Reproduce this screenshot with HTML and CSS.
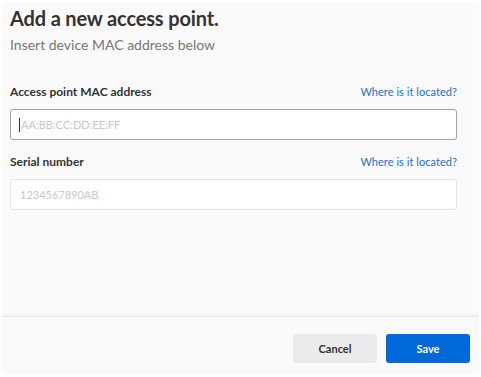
FILE: index.html
```html
<!DOCTYPE html>
<html>
<head>
<meta charset="utf-8">
<link rel="stylesheet" href="styles.css">
</head>
<body>
<div class="dialog">
  <div class="content">
    <h1 class="title">Add a new access point.</h1>
    <p class="subtitle">Insert device MAC address below</p>
    <div class="field field-first">
      <div class="field-head">
        <span class="label">Access point MAC address</span>
        <a class="link" href="#">Where is it located?</a>
      </div>
      <div class="input input-active"><span class="caret"></span><span class="ph">AA:BB:CC:DD:EE:FF</span></div>
    </div>
    <div class="field">
      <div class="field-head">
        <span class="label">Serial number</span>
        <a class="link" href="#">Where is it located?</a>
      </div>
      <div class="input"><span class="ph">1234567890AB</span></div>
    </div>
  </div>
  <div class="footer">
    <button class="btn btn-cancel">Cancel</button>
    <button class="btn btn-save">Save</button>
  </div>
</div>
</body>
</html>
```
FILE: styles.css
```css
html, body {
  margin: 0;
  padding: 0;
  background: #ffffff;
}
body {
  padding: 2px;
  height: 377px;
  box-sizing: border-box;
  font-family: Lato, "Liberation Sans", sans-serif;
}
.dialog {
  background: #fafafa;
  height: 373px;
  display: flex;
  flex-direction: column;
}
.content {
  flex: 1;
  padding: 3px 22px 0 8px;
}
.title {
  margin: 0;
  font-size: 20px;
  font-weight: 700;
  color: #333;
  line-height: 26px;
  letter-spacing: -0.15px;
}
.subtitle {
  margin: 5px 0 0 0;
  font-size: 14px;
  color: #777;
  line-height: 18px;
}
.field-first {
  margin-top: 30px;
}
.field {
  margin-bottom: 14px;
}
.field-head {
  display: flex;
  justify-content: space-between;
  align-items: baseline;
  height: 16px;
  margin-bottom: 9px;
}
.label {
  font-size: 12px;
  font-weight: 700;
  color: #333;
}
.link {
  font-size: 11px;
  color: #1a6fd8;
  text-decoration: none;
  letter-spacing: 0.05px;
}
.input {
  height: 31px;
  box-sizing: border-box;
  background: #fff;
  border: 1px solid #e4e4e4;
  border-radius: 3px;
  display: flex;
  align-items: center;
  padding-left: 9px;
}
.input-active {
  border-color: #a3a3a3;
  padding-left: 8px;
}
.caret {
  width: 1px;
  height: 14px;
  background: #333;
  margin-right: 1px;
}
.ph {
  font-size: 11px;
  color: #c8c8c8;
}
.footer {
  height: 59px;
  box-sizing: border-box;
  border-top: 1px solid #e6e6e6;
  box-shadow: 0 -2px 3px rgba(0,0,0,0.03);
  display: flex;
  justify-content: flex-end;
  align-items: flex-start;
  padding: 17px 9px 0 0;
  gap: 9px;
}
.btn {
  height: 29px;
  width: 84px;
  border: none;
  border-radius: 3px;
  font-family: Lato, "Liberation Sans", sans-serif;
  font-weight: 700;
  font-size: 11px;
  cursor: pointer;
}
.btn-cancel {
  background: #ebebeb;
  color: #333;
}
.btn-save {
  background: #0068d9;
  color: #fff;
}
```
